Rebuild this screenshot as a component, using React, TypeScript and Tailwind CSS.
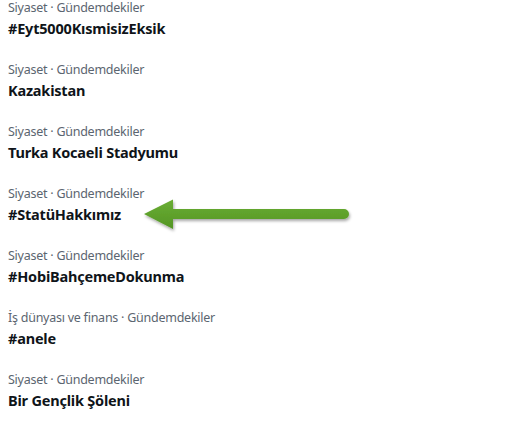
import React from "react";

const items = [
  { cat: "Siyaset · Gündemdekiler", title: "#Eyt5000KısmisizEksik" },
  { cat: "Siyaset · Gündemdekiler", title: "Kazakistan" },
  { cat: "Siyaset · Gündemdekiler", title: "Turka Kocaeli Stadyumu" },
  { cat: "Siyaset · Gündemdekiler", title: "#StatüHakkımız" },
  { cat: "Siyaset · Gündemdekiler", title: "#HobiBahçemeDokunma" },
  { cat: "İş dünyası ve finans · Gündemdekiler", title: "#anele" },
  { cat: "Siyaset · Gündemdekiler", title: "Bir Gençlik Şöleni" },
];

export default function App() {
  return (
    <div className="relative w-[531px] h-[430px] overflow-hidden bg-white" style={{ fontFamily: '"Noto Sans", "Open Sans", sans-serif' }}>
      <div className="flex flex-col gap-6 pl-2">
        {items.map((it, i) => (
          <div key={i} className="flex flex-col">
            <div className="text-[12.5px] leading-4 text-[#5b6570] tracking-[-0.25px]">{it.cat}</div>
            <div className="mt-0.5 text-[14.5px] leading-5 font-bold text-[#0f1419] tracking-[-0.2px]">{it.title}</div>
          </div>
        ))}
      </div>
      <svg className="absolute left-0 top-0" width="531" height="430" viewBox="0 0 531 430">
        <defs>
          <linearGradient id="g" x1="0" y1="0" x2="0" y2="1">
            <stop offset="0" stopColor="#6aae33" />
            <stop offset="1" stopColor="#549525" />
          </linearGradient>
          <filter id="s" x="-10%" y="-50%" width="120%" height="200%">
            <feDropShadow dx="1" dy="2" stdDeviation="1.5" floodColor="#000" floodOpacity="0.35" />
          </filter>
        </defs>
        <g filter="url(#s)">
          <path d="M144 214 L173 199.5 L173 209 L344 209 A5 5 0 0 1 344 219 L173 219 L173 229 Z" fill="url(#g)" />
        </g>
      </svg>
    </div>
  );
}
